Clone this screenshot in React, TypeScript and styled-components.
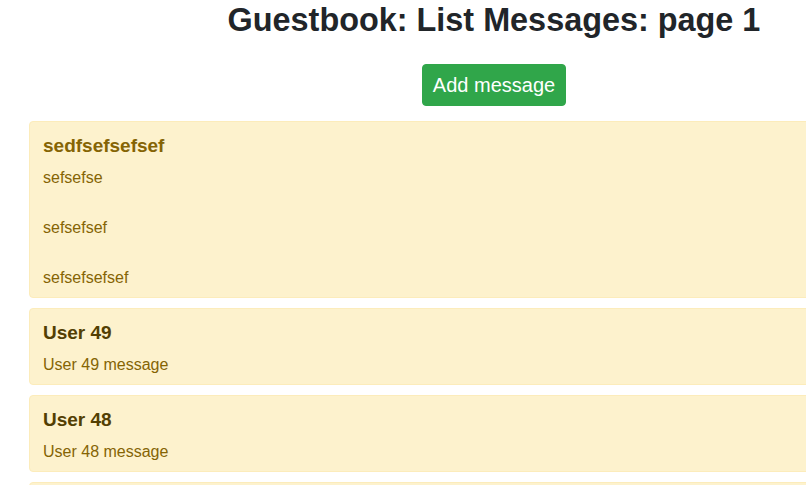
import React from "react";
import styled, { createGlobalStyle } from "styled-components";

const GlobalStyle = createGlobalStyle`
  html, body {
    margin: 0;
    padding: 0;
    overflow: hidden;
    background: #ffffff;
  }
  body {
    font-family: "Liberation Sans", Arial, Helvetica, sans-serif;
    font-size: 16px;
    line-height: 1.5;
    color: #212529;
  }
`;

const Page = styled.main`
  width: 930px;
  margin-left: 29px;
  display: flex;
  flex-direction: column;
`;

const Header = styled.header`
  display: flex;
  flex-direction: column;
  align-items: center;
  gap: 24px;
  margin-bottom: 15px;
`;

const Title = styled.h2`
  margin: 0;
  font-size: 32.4px;
  line-height: 40px;
  font-weight: 700;
  color: #212529;
`;

const AddButton = styled.button`
  font-family: inherit;
  font-size: 20px;
  line-height: 30px;
  padding: 5px 10px;
  color: #ffffff;
  background: #30a64a;
  border: 1px solid #30a64a;
  border-radius: 4px;
  cursor: pointer;
`;

const List = styled.section`
  display: flex;
  flex-direction: column;
  gap: 10px;
`;

const Card = styled.article`
  background: #fdf2cd;
  border: 1px solid #fcecbb;
  border-radius: 4px;
  padding: 12px 13px 7px;
  color: #856404;
`;

const CardTitle = styled.h5<{ $muted?: boolean }>`
  margin: 0 0 9px;
  font-size: 19px;
  line-height: 23px;
  font-weight: 700;
  color: ${(p) => (p.$muted ? "#856404" : "#533f03")};
`;

const Body = styled.div`
  display: flex;
  flex-direction: column;
  gap: 26px;
`;

const Line = styled.p`
  margin: 0;
  font-size: 16px;
  line-height: 24px;
`;

type Msg = { name: string; lines: string[]; muted?: boolean };

const messages: Msg[] = [
  { name: "sedfsefsefsef", lines: ["sefsefse", "sefsefsef", "sefsefsefsef"], muted: true },
  { name: "User 49", lines: ["User 49 message"] },
  { name: "User 48", lines: ["User 48 message"] },
  { name: "User 47", lines: ["User 47 message"] },
];

export default function App() {
  return (
    <>
      <GlobalStyle />
      <Page>
        <Header>
          <Title>Guestbook: List Messages: page 1</Title>
          <AddButton type="button">Add message</AddButton>
        </Header>
        <List>
          {messages.map((m) => (
            <Card key={m.name}>
              <CardTitle $muted={m.muted}>{m.name}</CardTitle>
              <Body>
                {m.lines.map((l, i) => (
                  <Line key={i}>{l}</Line>
                ))}
              </Body>
            </Card>
          ))}
        </List>
      </Page>
    </>
  );
}
